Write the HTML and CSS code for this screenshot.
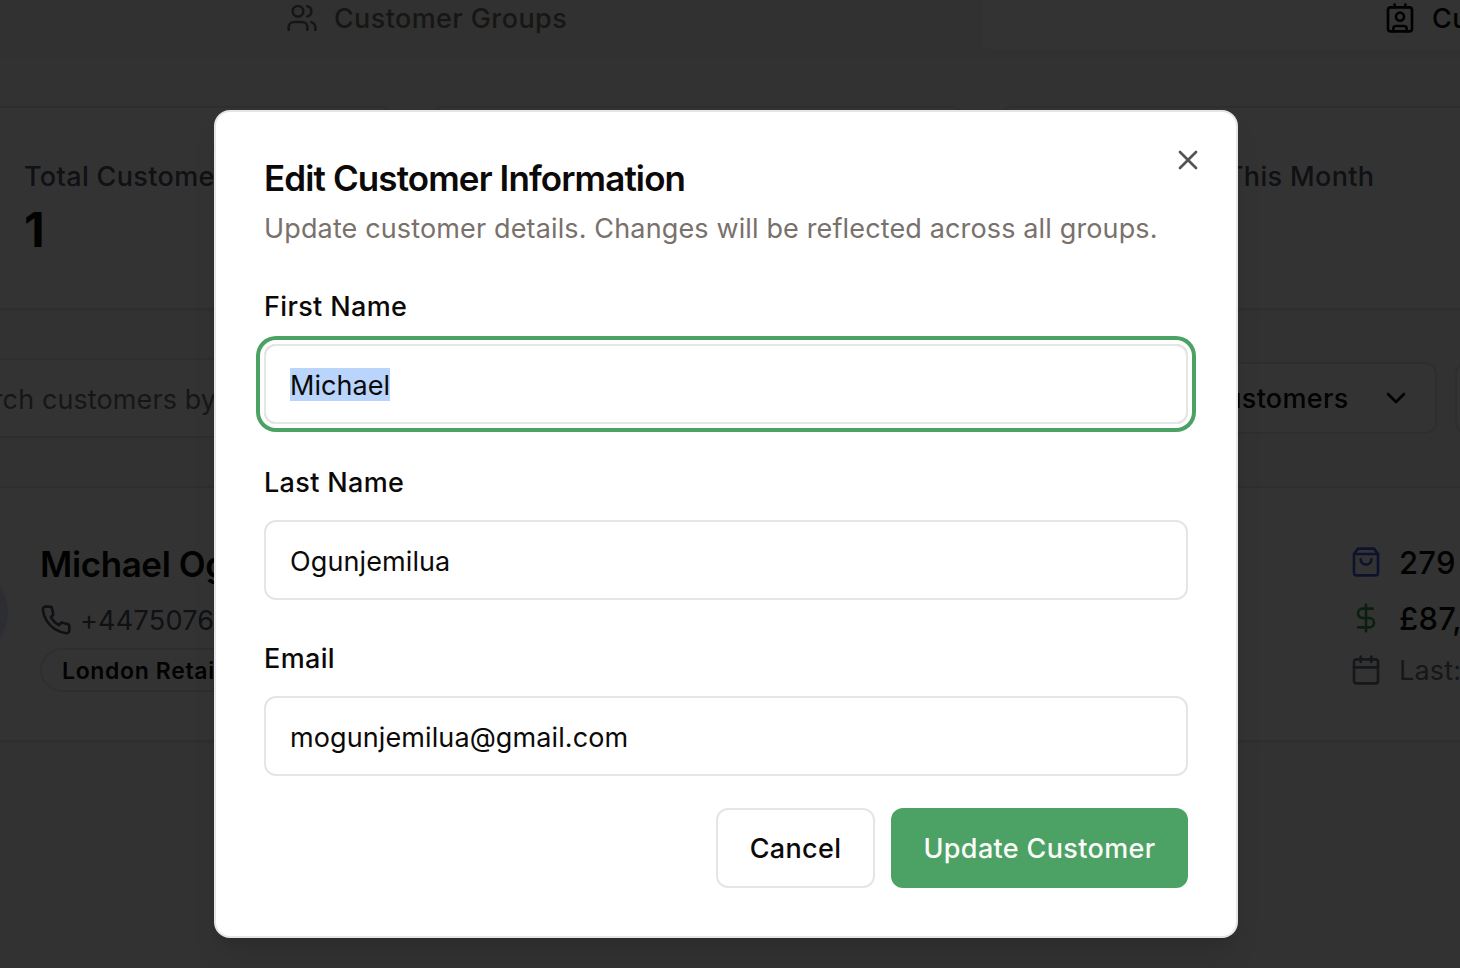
FILE: index.html
```html
<!DOCTYPE html>
<html lang="en">
<head>
<meta charset="utf-8">
<title>Customers</title>
<link rel="stylesheet" href="styles.css">
</head>
<body>
<div class="viewport">
  <main class="page">
    <nav class="tabs">
      <div class="tab">
        <svg class="icon" viewBox="0 0 24 24"><path d="M16 21v-2a4 4 0 0 0-4-4H6a4 4 0 0 0-4 4v2"/><circle cx="9" cy="7" r="4"/><path d="M22 21v-2a4 4 0 0 0-3-3.87"/><path d="M16 3.13a4 4 0 0 1 0 7.75"/></svg>
        <span>Customer Groups</span>
      </div>
      <div class="tab tab-active">
        <svg class="icon" viewBox="0 0 24 24"><path d="M16 2v2"/><path d="M7 22v-2a2 2 0 0 1 2-2h6a2 2 0 0 1 2 2v2"/><path d="M8 2v2"/><circle cx="12" cy="11" r="3"/><rect x="3" y="4" width="18" height="18" rx="2"/></svg>
        <span>Customers</span>
      </div>
    </nav>
    <section class="stats">
      <div class="stat"><p class="stat-label">Total Customers</p><p class="stat-value">1</p></div>
      <div class="stat"></div>
      <div class="stat stat-month"><p class="stat-label">New This Month</p></div>
      <div class="stat"></div>
    </section>
    <section class="filters">
      <div class="search"><span>Search customers by name</span></div>
      <div class="select"><span>All Customers</span><svg class="icon" viewBox="0 0 24 24"><path d="m6 9 6 6 6-6"/></svg></div>
      <div class="select"></div>
    </section>
    <section class="customer">
      <div class="avatar"></div>
      <div class="identity">
        <h3 class="name">Michael Ogunjemilua</h3>
        <p class="phone"><svg class="icon" viewBox="0 0 24 24"><path d="M22 16.92v3a2 2 0 0 1-2.18 2 19.79 19.79 0 0 1-8.63-3.07 19.5 19.5 0 0 1-6-6 19.79 19.79 0 0 1-3.07-8.67A2 2 0 0 1 4.11 2h3a2 2 0 0 1 2 1.72 12.84 12.84 0 0 0 .7 2.81 2 2 0 0 1-.45 2.11L8.09 9.91a16 16 0 0 0 6 6l1.27-1.27a2 2 0 0 1 2.11-.45 12.84 12.84 0 0 0 2.81.7A2 2 0 0 1 22 16.92z"/></svg><span class="number">+4475076</span></p>
        <span class="badge">London Retail</span>
      </div>
      <div class="metrics">
        <p class="metric"><svg class="icon blue" viewBox="0 0 24 24"><path d="M6 2 3 6v14a2 2 0 0 0 2 2h14a2 2 0 0 0 2-2V6l-3-4Z"/><path d="M3 6h18"/><path d="M16 10a4 4 0 0 1-8 0"/></svg><span>279</span></p>
        <p class="metric"><svg class="icon green" viewBox="0 0 24 24"><path d="M12 2v20"/><path d="M17 5H9.5a3.5 3.5 0 0 0 0 7h5a3.5 3.5 0 0 1 0 7H6"/></svg><span>£87,</span></p>
        <p class="metric last"><svg class="icon" viewBox="0 0 24 24"><path d="M8 2v4"/><path d="M16 2v4"/><rect x="3" y="4" width="18" height="18" rx="2"/><path d="M3 10h18"/></svg><span>Last:</span></p>
      </div>
    </section>
  </main>
  <div class="overlay">
    <div class="dialog">
      <header class="dialog-head">
        <h2 class="title">Edit Customer Information</h2>
        <p class="desc">Update customer details. Changes will be reflected across all groups.</p>
      </header>
      <div class="field"><div class="label">First Name</div><div class="input input-focus"><span class="selected">Michael</span></div></div>
      <div class="field"><div class="label">Last Name</div><div class="input"><span class="value">Ogunjemilua</span></div></div>
      <div class="field"><div class="label">Email</div><div class="input"><span class="value">mogunjemilua@gmail.com</span></div></div>
      <footer class="actions"><div class="btn">Cancel</div><div class="btn btn-primary">Update Customer</div></footer>
      <svg class="icon close" viewBox="0 0 24 24"><path d="M18 6 6 18"/><path d="m6 6 12 12"/></svg>
    </div>
  </div>
</div>
</body>
</html>
```
FILE: styles.css
```css
* { box-sizing: border-box; }
body, p, h2, h3 { margin: 0; font-weight: inherit; }
body { font-family: Inter, "Liberation Sans", sans-serif; font-size: 27px; color: #0c0a09; }
.viewport { position: relative; width: 1460px; height: 968px; overflow: hidden; background: #fafaf9; }
.icon { width: 32px; height: 32px; flex: none; fill: none; stroke: currentColor; stroke-width: 2; stroke-linecap: round; stroke-linejoin: round; }

.page { width: 2248px; margin-left: -142px; }
.tabs { display: grid; grid-template-columns: 1fr 1fr; height: 58px; padding: 0 12px 8px; background: #f5f5f4; border-radius: 0 0 16px 16px; }
.tab { display: flex; align-items: center; justify-content: center; gap: 16px; padding: 0 0 14px 1px; color: #78716c; font-weight: 500; letter-spacing: .4px; }
.tab-active { justify-content: flex-start; padding-left: 402px; background: #fff; border-radius: 0 0 10px 10px; color: #0c0a09; }
.stats { display: grid; grid-template-columns: repeat(4, 1fr); gap: 32px; margin-top: 48px; }
.stat { height: 204px; padding: 49px 0 0 164px; border: 2px solid #e7e5e4; border-radius: 16px; background: #fff; box-shadow: 0 2px 4px rgba(0,0,0,.05); white-space: nowrap; }
.stat-month { padding-left: 159px; }
.stat-label { line-height: 40px; color: #4b5563; font-weight: 500; letter-spacing: .35px; }
.stat-value { font-size: 48px; line-height: 66px; font-weight: 700; }
.filters { display: flex; align-items: center; gap: 18px; height: 80px; margin-top: 48px; }
.search { display: flex; align-items: center; width: 1231px; height: 80px; padding: 2px 0 0 84px; border: 2px solid #e7e5e4; border-radius: 12px; color: #78716c; background: #fff; letter-spacing: .1px; }
.select { display: flex; align-items: center; justify-content: space-between; width: 330px; height: 72px; padding: 0 23px 0 55px; border: 2px solid #e7e5e4; border-radius: 12px; background: #fff; font-weight: 500; letter-spacing: .3px; }
.customer { display: flex; height: 256px; margin-top: 48px; border: 2px solid #e7e5e4; border-radius: 16px; background: #fff; box-shadow: 0 2px 4px rgba(0,0,0,.05); }
.avatar { width: 96px; height: 96px; margin: 76px 32px 0 52px; border-radius: 50%; background: #e0e7ff; }
.identity { width: 1310px; padding-top: 54px; }
.name { font-size: 35px; line-height: 44px; font-weight: 600; letter-spacing: -.4px; }
.phone { display: flex; align-items: center; gap: 8px; height: 40px; margin-top: 14px; color: #4b5563; }
.number { padding-top: 2px; line-height: 38px; letter-spacing: .25px; }
.badge { display: inline-flex; align-items: center; height: 44px; margin-top: 8px; padding: 2px 20px 0; border: 2px solid #e7e5e4; border-radius: 22px; font-size: 23px; font-weight: 600; letter-spacing: .65px; }
.metrics { padding-top: 54px; }
.metric { display: flex; align-items: center; gap: 17px; height: 40px; margin-bottom: 16px; font-size: 31px; font-weight: 500; letter-spacing: .2px; }
.last { margin-top: -4px; font-size: 27px; font-weight: 400; color: #6b7280; }
.blue { color: #3f60d8; }
.green { color: #3f9a48; }

.overlay { position: absolute; inset: 0; display: flex; justify-content: center; align-items: flex-start; padding: 110px 8px 0 0; background: rgba(0,0,0,.8); }
.dialog { position: relative; width: 1024px; height: 828px; padding: 48px; border: 2px solid #e5e5e5; border-radius: 16px; background: #fff; box-shadow: 0 20px 30px -6px rgba(0,0,0,.1), 0 8px 12px -8px rgba(0,0,0,.1); }
.dialog-head { margin-bottom: 43px; }
.title { font-size: 35px; line-height: 36px; font-weight: 600; letter-spacing: -.89px; }
.desc { margin-top: 13px; line-height: 40px; color: #78716c; white-space: nowrap; letter-spacing: .14px; }
.field { margin-bottom: 44px; }
.label { height: 28px; padding-top: 1px; line-height: 28px; margin-bottom: 24px; font-weight: 500; letter-spacing: .35px; }
.input { display: flex; align-items: center; height: 80px; padding: 0 24px; border: 2px solid #e5e5e5; border-radius: 12px; letter-spacing: .1px; }
.input-focus { box-shadow: 0 0 0 4px #fff, 0 0 0 8px #4ca264; letter-spacing: .03px; }
.selected { padding-top: 2px; line-height: 31px; background: #b9d5fb; }
.value { padding-top: 2px; }
.actions { display: flex; justify-content: flex-end; gap: 16px; margin-top: -12px; }
.btn { display: flex; align-items: center; justify-content: center; width: 159px; height: 80px; border: 2px solid #e5e5e5; border-radius: 12px; font-weight: 500; letter-spacing: .35px; }
.btn-primary { width: 297px; border: 0; background: #4ca264; color: #fafaf9; }
.close { position: absolute; top: 32px; right: 32px; color: #555; }
```
